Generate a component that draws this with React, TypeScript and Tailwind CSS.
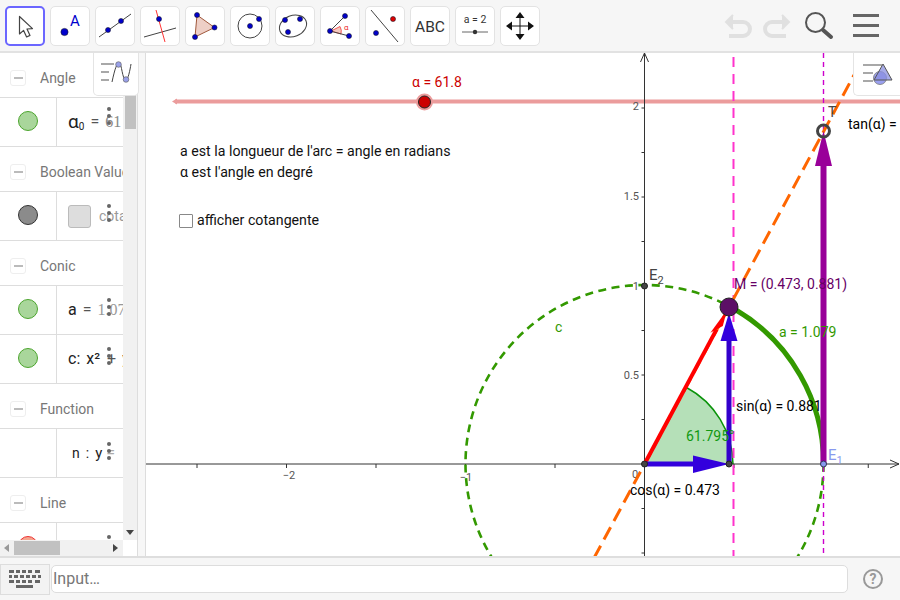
import React from "react";

const font = "font-['Roboto',sans-serif]";

// toolbar icons, 40x40 boxes
const Dot = ({ x, y, r = 3, fill = "#0000cc" }: { x: number; y: number; r?: number; fill?: string }) => (
  <circle cx={x} cy={y} r={r} fill={fill} stroke="#1a1a2a" strokeWidth={0.6} />
);

const toolIcons: React.ReactNode[] = [
  <path key="a" d="M14.5 10.5 L14.5 28 L18.6 24.4 L21.6 31 L25 29.4 L22 23 L27.5 22.6 Z" fill="#fff" stroke="#444" strokeWidth={1.2} strokeLinejoin="round" />,
  <g key="b">
    <Dot x={14.5} y={26} r={3.6} />
    <text x={20} y={20} fontSize={15} fill="#0000cc" fontFamily="Roboto, sans-serif">A</text>
  </g>,
  <g key="c">
    <line x1={4} y1={31} x2={36} y2={8} stroke="#444" strokeWidth={1} />
    <Dot x={13} y={24} r={2.5} />
    <Dot x={26} y={15} r={2.5} />
  </g>,
  <g key="d">
    <line x1={4} y1={31} x2={36} y2={22} stroke="#444" strokeWidth={1} />
    <line x1={16} y1={4} x2={25} y2={36} stroke="#f33" strokeWidth={1} />
    <Dot x={19} y={13} r={2.5} />
  </g>,
  <g key="e">
    <path d="M12 9 L29.5 21.5 L10 31 Z" fill="#eecfc6" stroke="#a0583c" strokeWidth={1} />
    <Dot x={12} y={9} r={2.5} />
    <Dot x={29.5} y={21.5} r={2.5} />
    <Dot x={10} y={31} r={2.5} />
  </g>,
  <g key="f">
    <circle cx={20} cy={20} r={12} fill="none" stroke="#444" strokeWidth={1} />
    <Dot x={20} y={20} r={2.5} />
    <Dot x={29} y={13} r={2.5} />
  </g>,
  <g key="g">
    <ellipse cx={18} cy={20} rx={14} ry={10.5} transform="rotate(-22 18 20)" fill="none" stroke="#444" strokeWidth={1} />
    <Dot x={10} y={14} r={2.5} />
    <Dot x={25} y={13} r={2.5} />
    <Dot x={13} y={26} r={2.5} />
  </g>,
  <g key="h">
    <path d="M11 25 L20 20.5 A10 10 0 0 1 21 28 Z" fill="#f3c9c0" stroke="#e33" strokeWidth={0.8} />
    <line x1={10} y1={25} x2={25} y2={10} stroke="#444" strokeWidth={1} />
    <line x1={10} y1={25} x2={29} y2={30} stroke="#444" strokeWidth={1} />
    <Dot x={25} y={10} r={2.5} />
    <Dot x={10} y={25} r={2.5} />
    <Dot x={29} y={30} r={2.5} />
    <text x={24} y={24} fontSize={8} fill="#e33" fontFamily="Roboto, sans-serif">α</text>
  </g>,
  <g key="i">
    <line x1={6} y1={4} x2={33} y2={36} stroke="#444" strokeWidth={1} />
    <Dot x={28} y={13} r={2.5} fill="#e00000" />
    <Dot x={11} y={27} r={2.5} />
  </g>,
  <text key="j" x={20} y={26} textAnchor="middle" fontSize={15.5} fill="#333" fontFamily="Roboto, sans-serif">ABC</text>,
  <g key="k">
    <text x={20} y={17} textAnchor="middle" fontSize={10.5} fill="#333" fontFamily="Roboto, sans-serif">a = 2</text>
    <line x1={7} y1={26} x2={33} y2={26} stroke="#666" strokeWidth={1} />
    <circle cx={20} cy={26} r={2.2} fill="#333" />
  </g>,
  <g key="l" fill="#111">
    <path d="M20 10 V30 M10 20 H30" stroke="#111" strokeWidth={1} />
    <path d="M20 6 L24.5 12 H15.5 Z M20 34 L24.5 28 H15.5 Z M6 20 L12 15.5 V24.5 Z M34 20 L28 15.5 V24.5 Z" />
  </g>,
];

const Kebab = ({ top }: { top: number }) => (
  <div className="absolute left-[107px] flex flex-col gap-[3px]" style={{ top }}>
    <span className="w-[4px] h-[4px] rounded-full bg-[#666]" />
    <span className="w-[4px] h-[4px] rounded-full bg-[#666]" />
    <span className="w-[4px] h-[4px] rounded-full bg-[#666]" />
  </div>
);

const Group = ({ label }: { label: string }) => (
  <div className="h-[45px] flex items-center pt-[6px] border-b border-[#ddd] bg-white shrink-0">
    <div className="ml-[10px] w-[16px] h-[16px] rounded-[3px] border border-[#eee] flex items-center justify-center">
      <span className="w-[9px] h-[2px] bg-[#bbb]" />
    </div>
    <span className="ml-[14px] text-[14px] text-[#777] whitespace-nowrap">{label}</span>
  </div>
);

const Row = ({ marker, children, kebabTop = 12 }: { marker?: string; children: React.ReactNode; kebabTop?: number }) => (
  <div className="h-[49px] flex border-b border-[#ddd] bg-white shrink-0">
    <div className="w-[57px] pb-[3px] shrink-0 border-r border-[#ddd] flex items-center justify-center">{marker && <span className={marker} />}</div>
    <div className="flex-1 flex items-center pl-[11px] whitespace-nowrap text-[16px] text-[#222] overflow-hidden">{children}</div>
    <Kebab top={kebabTop} />
  </div>
);

const green = "w-[20px] h-[20px] rounded-full bg-[#a9d69b] border border-[#4ca52e]";

const AlgebraView = () => (
  <div className="w-[123px] h-[487px] overflow-hidden shrink-0 relative">
    <div className="w-[146px] flex flex-col">
      <Group label="Angle" />
      <div className="relative">
        <Row marker={green} kebabTop={9}>
          <span className="text-[19px]">α<sub className="text-[10px]">0</sub></span>
          <span className="ml-[6px] text-[#555]">=</span>
          <span className="ml-[6px] font-['Liberation_Serif',serif] text-[#888]">61</span>
        </Row>
      </div>
      <Group label="Boolean Value" />
      <div className="relative">
        <Row marker="w-[20px] h-[20px] rounded-full bg-[#8b8b8b] border border-[#333]" kebabTop={12}>
          <span className="w-[23px] h-[23px] rounded-[3px] bg-[#ddd] border border-[#bbb] mr-[8px] shrink-0" />
          <span className="text-[#999] text-[14px]">cota</span>
        </Row>
      </div>
      <Group label="Conic" />
      <div className="relative">
        <Row marker={green} kebabTop={12}>
          <span>a</span>
          <span className="ml-[6px] text-[#555]">=</span>
          <span className="ml-[6px] font-['Liberation_Serif',serif] text-[#999]">1.07</span>
        </Row>
      </div>
      <div className="relative">
        <Row marker={green} kebabTop={12}>
          <span>c:</span>
          <span className="ml-[6px]">x²</span>
          <span className="ml-[7px] text-[#555]">+</span>
          <span className="ml-[6px]">y</span>
        </Row>
      </div>
      <Group label="Function" />
      <div className="relative">
        <Row kebabTop={13}>
          <span className="ml-[4px] text-[14px]">n</span>
          <span className="ml-[6px] text-[14px]">:</span>
          <span className="ml-[6px] text-[15px]">y</span>
          <span className="ml-[4px] text-[#aaa]">=</span>
        </Row>
      </div>
      <Group label="Line" />
      <div className="relative">
        <Row marker="w-[20px] h-[20px] rounded-full bg-[#f5a58f] border border-[#e33]" kebabTop={12}>
          <span />
        </Row>
      </div>
    </div>
  </div>
);

const Graph = () => {
  const ox = 644.5;
  const oy = 464;
  const ux = 179;
  const uy = 178;
  const xTicks = [-2.5, -2, -1.5, -1, -0.5, 0.5, 1, 1.25];
  const yTicks = [2, 1.75, 1.5, 1.25, 1, 0.75, 0.5, 0.25, -0.25, -0.5];
  return (
    <svg className="absolute inset-0" width={754} height={503} viewBox="146 53 754 503" fontFamily="Roboto, sans-serif">
      {/* slider */}
      <line x1={175} y1={101.5} x2={900} y2={101.5} stroke="#eb9c9c" strokeWidth={4} />
      <path d="M172 101.5 L177 98.5 V104.5 Z" fill="#eb9c9c" />
      {/* sector */}
      <path d={`M${ox} ${oy} L686.5 387.5 A88 88 0 0 1 733 464 Z`} fill="#b5e0b8" />
      <path d="M686.5 387.5 A88 88 0 0 1 733 464" fill="none" stroke="#0a930a" strokeWidth={1.5} />
      {/* axes */}
      <line x1={146} y1={oy} x2={899} y2={oy} stroke="#333" strokeWidth={1} />
      <line x1={ox} y1={53} x2={ox} y2={556} stroke="#333" strokeWidth={1} />
      <path d="M890 460 L899 464 L890 468 M640.5 62 L644.5 53 L648.5 62" fill="none" stroke="#333" strokeWidth={1} />
      {xTicks.map((t) => (
        <line key={t} x1={ox + t * ux} y1={oy} x2={ox + t * ux} y2={oy + 4} stroke="#333" strokeWidth={1} />
      ))}
      {yTicks.map((t) => (
        <line key={t} x1={ox - 3} y1={oy - t * uy} x2={ox} y2={oy - t * uy} stroke="#333" strokeWidth={1} />
      ))}
      <g fontSize={11} fill="#555">
        <text x={289} y={479} textAnchor="middle">−2</text>
        <text x={466} y={481} textAnchor="middle">−1</text>
        <text x={635} y={478} textAnchor="middle">0</text>
        <text x={639} y={110} textAnchor="end">2</text>
        <text x={639} y={200} textAnchor="end">1.5</text>
        <text x={639} y={290} textAnchor="end">1</text>
        <text x={639} y={379} textAnchor="end">0.5</text>
      </g>
      {/* circle */}
      <circle cx={ox} cy={oy} r={179} fill="none" stroke="#339900" strokeWidth={2.6} strokeDasharray="8 5.5" />
      <path d="M736 310 A179 178 0 0 1 823.5 464" fill="none" stroke="#339900" strokeWidth={5} />
      {/* lines */}
      <line x1={733.5} y1={57} x2={733.5} y2={556} stroke="#ff33cc" strokeWidth={2} strokeDasharray="10 7" />
      <line x1={823.5} y1={53} x2={823.5} y2={556} stroke="#cc00cc" strokeWidth={1.4} strokeDasharray="5 4" />
      <line x1={594} y1={558} x2={854} y2={75} stroke="#ff6600" strokeWidth={3} strokeDasharray="14 7" />
      {/* vectors */}
      <line x1={ox} y1={oy} x2={716.6} y2={329.4} stroke="#ff0000" strokeWidth={4} />
      <path d="M727 310 L722.8 326.1 L710.4 332.7 Z" fill="#ff0000" />
      <line x1={ox} y1={oy} x2={700} y2={oy} stroke="#3300dd" strokeWidth={5} />
      <path d="M693 455.5 L729 464 L693 473 Z" fill="#3300dd" />
      <line x1={729} y1={464} x2={729} y2={335} stroke="#3300cc" strokeWidth={5} />
      <path d="M729 313 L720.5 341 L737.5 341 Z" fill="#3300dd" />
      <line x1={823.5} y1={464} x2={823.5} y2={160} stroke="#990099" strokeWidth={6} />
      <path d="M823.5 131 L815 166 L832 166 Z" fill="#990099" />
      {/* points */}
      <circle cx={424.5} cy={102} r={8.5} fill="#eb9c9c" />
      <circle cx={424.5} cy={102} r={6} fill="#cc0000" stroke="#222" strokeWidth={1} />
      <circle cx={823.5} cy={131} r={6} fill="none" stroke="#444" strokeWidth={3} />
      <circle cx={729} cy={307} r={9} fill="#5c0f66" stroke="#222" strokeWidth={1} />
      <circle cx={ox} cy={oy} r={3} fill="#444" stroke="#222" strokeWidth={1} />
      <circle cx={729} cy={464} r={3} fill="#444" stroke="#222" strokeWidth={1} />
      <circle cx={ox} cy={286} r={3} fill="#444" stroke="#222" strokeWidth={1} />
      <circle cx={823.5} cy={464} r={3} fill="#8899ee" stroke="#335" strokeWidth={1} />
      {/* labels */}
      <g fontSize={14}>
        <text x={412} y={87} fill="#cc0000">α = 61.8</text>
        <text x={649} y={280} fill="#444" fontSize={15}>E<tspan fontSize={11} dy={4}>2</tspan></text>
        <text x={734} y={289} fill="#660066">M = (0.473, 0.881)</text>
        <text x={779} y={337} fill="#339900">a = 1.079</text>
        <text x={736} y={411} fill="#000">sin(α) = 0.881</text>
        <text x={630} y={495} fill="#000">cos(α) = 0.473</text>
        <text x={686} y={441} fill="#119911">61.795°</text>
        <text x={848} y={129} fill="#000">tan(α) =</text>
        <text x={555} y={332} fill="#339900">c</text>
        <text x={828} y={460} fill="#8899ee" fontSize={15}>E<tspan fontSize={11} dy={4}>1</tspan></text>
        <text x={828} y={117} fill="#444">T</text>
      </g>
    </svg>
  );
};

const App = () => {
  return (
    <div className={`w-[900px] h-[600px] flex flex-col overflow-hidden bg-white ${font}`}>
      {/* toolbar */}
      <div className="h-[53px] shrink-0 bg-[#f6f6f6] border-b-2 border-[#e2e2e2] flex items-center pl-[5px] pr-[21px] gap-[5px]">
        {toolIcons.map((icon, i) => (
          <div
            key={i}
            className={
              i === 0
                ? "w-[40px] h-[40px] rounded-[5px] bg-white border-2 border-[#6b66ff]"
                : "w-[40px] h-[40px] rounded-[5px] bg-white border border-[#e3e3e3]"
            }
          >
            <svg width={40} height={40} viewBox="0 0 40 40" className={i === 0 ? "-m-[2px]" : "-m-px"}>
              {icon}
            </svg>
          </div>
        ))}
        <div className="ml-auto flex items-center gap-[5px]">
          <svg width={32} height={26} viewBox="0 0 32 26" fill="none" stroke="#e0e0e0" strokeWidth={4}>
            <path d="M4 9 H20 A7 7 0 0 1 20 23 H6" />
            <path d="M10 2 L3 9 L10 16" fill="#e0e0e0" strokeWidth={2} />
          </svg>
          <svg width={32} height={26} viewBox="0 0 32 26" fill="none" stroke="#e0e0e0" strokeWidth={4}>
            <path d="M28 9 H12 A7 7 0 0 0 12 23 H26" />
            <path d="M22 2 L29 9 L22 16" fill="#e0e0e0" strokeWidth={2} />
          </svg>
          <svg width={32} height={32} viewBox="0 0 32 32" fill="none" className="ml-[6px]" stroke="#555">
            <circle cx={12.5} cy={12.5} r={9.5} strokeWidth={2} />
            <line x1={20} y1={20} x2={28} y2={27} strokeWidth={4} strokeLinecap="round" />
          </svg>
          <div className="ml-[13px] flex flex-col gap-[7px]">
            <span className="block w-[26px] h-[3px] bg-[#666]" />
            <span className="block w-[26px] h-[3px] bg-[#666]" />
            <span className="block w-[26px] h-[3px] bg-[#666]" />
          </div>
        </div>
      </div>

      {/* main */}
      <div className="flex-1 flex min-h-0">
        <div className="w-[146px] shrink-0 flex relative border-r border-[#ddd]">
          <div className="w-[123px] flex flex-col">
            <AlgebraView />
            <div className="h-[16px] shrink-0 bg-[#f1f1f1] flex items-center">
              <span className="ml-[4px] w-0 h-0 border-y-[4px] border-y-transparent border-r-[5px] border-r-[#999]" />
              <span className="ml-[5px] w-[46px] h-[14px] bg-[#c1c1c1]" />
              <span className="ml-auto mr-[5px] w-0 h-0 border-y-[4px] border-y-transparent border-l-[5px] border-l-[#444]" />
            </div>
          </div>
          <div className="w-[14px] shrink-0 flex flex-col">
            <div className="h-[487px] bg-[#f1f1f1] relative">
              <div className="mx-auto w-[11px] h-[76px] bg-[#c1c1c1]" />
              <span className="absolute left-[3px] bottom-[5px] w-0 h-0 border-x-[4px] border-x-transparent border-t-[5px] border-t-[#444]" />
            </div>
          </div>
          <div className="flex-1 border-l border-[#ddd] bg-[#f7f7f7]" />
          {/* style bar tab */}
          <div className="absolute left-[93px] top-0 w-[46px] h-[43px] bg-white rounded-b-[5px] border-x border-b border-[#e4e4e4] flex items-center justify-center">
            <svg width={32} height={32} viewBox="0 0 32 32" fill="none">
              <path d="M1 6 H14 M1 14 H9 M1 22 H9" stroke="#a8a8a8" strokeWidth={2} />
              <path d="M12 24 C15 10 17 5 19 5 C22 5 22 22 26 22 C28 22 30 12 31 6" stroke="#444" strokeWidth={1} />
              <circle cx={18.5} cy={6.5} r={2.8} fill="#99a0e8" stroke="#555" strokeWidth={0.6} />
              <circle cx={26} cy={21.5} r={2.8} fill="#99a0e8" stroke="#555" strokeWidth={0.6} />
            </svg>
          </div>
        </div>

        {/* graphics view */}
        <div className="flex-1 relative overflow-hidden bg-white">
          <Graph />
          <div className="absolute left-[34px] top-[88px] text-[14.2px] leading-[21px] text-[#111] whitespace-nowrap">
            <div>a est la longueur de l'arc = angle en radians</div>
            <div>α est l'angle en degré</div>
          </div>
          <div className="absolute left-[33px] top-[157px] flex items-center gap-[4px] text-[14.2px] text-[#111] whitespace-nowrap">
            <span className="w-[14px] h-[14px] border-[1.5px] border-[#888] rounded-[1px] bg-white" />
            <span>afficher cotangente</span>
          </div>
          <div className="absolute right-0 top-0 w-[47px] h-[43px] bg-white rounded-bl-[5px] border-l border-b border-[#e4e4e4] flex items-center justify-center">
            <svg width={34} height={32} viewBox="0 0 34 32" fill="none">
              <path d="M3 7 H22 M3 15 H13 M3 23 H13" stroke="#a8a8a8" strokeWidth={2} />
              <circle cx={20} cy={20} r={6.5} fill="#9aa0f0" stroke="#777" strokeWidth={0.8} />
              <path d="M23 6 L32 22 H14 Z" fill="#8a8fe0" fillOpacity={0.75} stroke="#555" strokeWidth={1} />
            </svg>
          </div>
        </div>
      </div>

      {/* input bar */}
      <div className="h-[44px] shrink-0 bg-[#f6f6f6] border-t-2 border-[#dedede] flex items-center">
        <div className="w-[50px] h-[31px] bg-[#f3f3f3] border border-[#ddd] flex items-center justify-center shrink-0">
          <svg width={34} height={20} viewBox="0 0 34 20" fill="#666">
            <path d="M1 1h5v3H1z M8 1h4v3H8z M14 1h4v3h-4z M20 1h4v3h-4z M27 1h5v3h-5z M1 6h3v3H1z M6 6h4v3H6z M12 6h4v3h-4z M18 6h4v3h-4z M24 6h4v3h-4z M30 6h3v3h-3z M1 11h5v3H1z M8 11h4v3H8z M14 11h4v3h-4z M20 11h4v3h-4z M27 11h5v3h-5z M8 16h17v3H8z" />
          </svg>
        </div>
        <div className="ml-px w-[797px] h-[28px] bg-white border border-[#ddd] rounded-[5px] flex items-center pl-px text-[16px] text-[#777]">Input…</div>
        <svg width={22} height={22} viewBox="0 0 22 22" className="ml-[14px]" fill="none">
          <circle cx={11} cy={11} r={9} stroke="#999" strokeWidth={2} />
          <text x={11} y={16} textAnchor="middle" fontSize={14} fontWeight={700} fill="#999" fontFamily="Roboto, sans-serif">?</text>
        </svg>
      </div>
    </div>
  );
};

export default App;
